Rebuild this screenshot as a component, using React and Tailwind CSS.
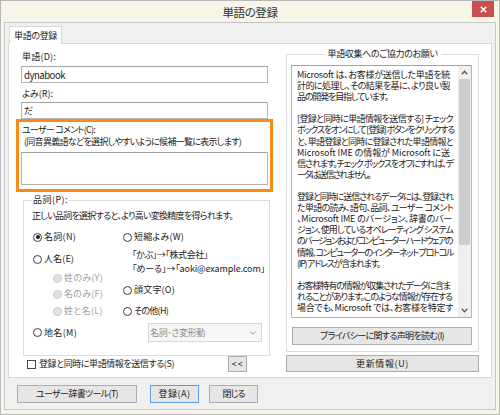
import React, { useLayoutEffect, useRef, useState } from "react";

const F = "font-['Noto_Sans_CJK_JP','Noto_Sans',sans-serif] [font-feature-settings:'palt']";

// Fits a single line of text to the width it has in the reference by
// adjusting letter-spacing (value computed at run time).
function Fit({ w, children, className = "" }) {
  const ref = useRef(null);
  const [ls, setLs] = useState(null);
  useLayoutEffect(() => {
    const el = ref.current;
    if (!el) return;
    el.style.letterSpacing = "0px";
    const natural = el.getBoundingClientRect().width;
    const n = Array.from(el.textContent || "").length;
    if (n > 0) {
      let v = (w - natural) / n;
      v = Math.max(-2.2, Math.min(1.2, v));
      setLs(v);
    }
  }, [w]);
  return (
    <span
      ref={ref}
      className={"inline-block whitespace-nowrap " + className}
      style={ls != null ? { letterSpacing: ls + "px" } : undefined}
    >
      {children}
    </span>
  );
}

function Radio({ checked = false, disabled = false }) {
  return (
    <span
      className={
        disabled
          ? "inline-flex w-[9px] h-[9px] rounded-full border border-[#c9c9c9] bg-[#e2e2e2] shrink-0"
          : "inline-flex items-center justify-center w-[9px] h-[9px] rounded-full border border-[#3c3c3c] bg-white shrink-0"
      }
    >
      {checked ? <span className="block w-[4px] h-[4px] rounded-full bg-[#1b1b1b]" /> : null}
    </span>
  );
}

function RadioItem({ label, w, checked, disabled, className = "" }) {
  return (
    <div className={"flex items-center h-[12px] leading-[12px] " + className}>
      <Radio checked={checked} disabled={disabled} />
      <span className={disabled ? "ml-[2px] text-[#a2a2a2]" : "ml-[2px]"}>
        <Fit w={w}>{label}</Fit>
      </span>
    </div>
  );
}

function Btn({ children, className = "", primary = false }) {
  return (
    <div
      className={
        (primary ? "border border-[#5d9fdc] " : "border border-[#adadad] ") +
        "bg-[#e6e6e6] flex items-center justify-center leading-[12px] " +
        className
      }
    >
      {children}
    </div>
  );
}

function Chevron({ up = false }) {
  return (
    <svg width="7" height="5" viewBox="0 0 7 5">
      <path
        d={up ? "M0.8 4.2 L3.5 1.2 L6.2 4.2" : "M0.8 0.8 L3.5 3.8 L6.2 0.8"}
        fill="none"
        stroke="#5a5a5a"
        strokeWidth="1.3"
      />
    </svg>
  );
}

const infoLines = [
  ["Microsoft は、お客様が送信した単語を統", 153],
  ["計的に処理し、その結果を基に、より良い製", 153],
  ["品の開発を目指しています。", 91],
  ["", 0],
  ["[登録と同時に単語情報を送信する] チェック", 156],
  ["ボックスをオンにして [登録] ボタンをクリックする", 157],
  ["と、単語登録と同時に登録された単語情報と", 156],
  ["Microsoft IME の情報が Microsoft に送", 153],
  ["信されます。チェック ボックスをオフにすれば、デ", 156],
  ["ータは送信されません。", 73],
  ["", 0],
  ["登録と同時に送信されるデータには、登録され", 156],
  ["た単語の読み、語句、品詞、ユーザー コメント", 156],
  ["、Microsoft IME のバージョン、辞書のバー", 155],
  ["ジョン、使用しているオペレーティング システム", 156],
  ["のバージョンおよびコンピューター ハードウェアの", 155],
  ["情報、コンピューターのインターネット プロトコル", 156],
  ["(IP) アドレスが含まれます。", 83],
  ["", 0],
  ["お客様特有の情報が収集されたデータに含ま", 153],
  ["れることがあります。このような情報が存在する", 155],
  ["場合でも、Microsoft では、お客様を特定す", 156],
];

export default function App() {
  return (
    <div
      className={
        F +
        " w-[500px] h-[415px] bg-[#f7f4e8] border border-[#b8b8b8] flex flex-col px-[3px] pb-[4px] text-[9px] text-[#1b1b1b] overflow-hidden"
      }
    >
      {/* title bar */}
      <div className="h-[21px] flex shrink-0">
        <div className="w-[24px]" />
        <div className="flex-1 flex items-center justify-center text-[11.5px] text-[#333333] pt-[2px]">
          <Fit w={55}>単語の登録</Fit>
        </div>
        <div className="w-[22px] h-[16px] mr-[2px] bg-[#c75050] flex items-center justify-center">
          <svg width="7" height="7" viewBox="0 0 7 7">
            <path d="M0.8 0.8 L6.2 6.2 M6.2 0.8 L0.8 6.2" stroke="#ffffff" strokeWidth="1.6" />
          </svg>
        </div>
      </div>

      {/* client */}
      <div className="flex-1 border border-[#c6c6c6] bg-[#f0f0f0] pt-[3px] px-[3px] flex flex-col">
        {/* tab */}
        <div className="flex pl-[1px]">
          <div className="relative z-10 -mb-px h-[18px] w-[53px] border border-b-0 border-[#d9d9d9] bg-white flex items-center justify-center leading-[12px]">
            <Fit w={43}>単語の登録</Fit>
          </div>
        </div>

        {/* panel */}
        <div className="h-[335px] border border-[#d9d9d9] bg-white flex">
          {/* left column */}
          <div className="ml-[7px] w-[257px] flex flex-col">
            <div className="mt-[7px] pl-[6px] leading-[12px]">
              <Fit w={34}>単語(D):</Fit>
            </div>
            <div className="mt-[3px] ml-[5px] w-[247px] h-[17px] border border-[#b5b5b5] border-t-[#a3a3a3] flex items-center px-[2px] leading-[12px] text-[9.5px]">
              <Fit w={41}>dynabook</Fit>
            </div>
            <div className="mt-[5px] pl-[6px] leading-[12px]">
              <Fit w={31}>よみ(R):</Fit>
            </div>
            <div className="mt-[2px] ml-[5px] w-[247px] h-[17px] border border-[#b5b5b5] border-t-[#a3a3a3] flex items-center px-[2px] leading-[12px]">
              だ
            </div>

            {/* highlighted comment block */}
            <div className="w-[257px] h-[73px] border-[3px] border-[#fb8a17] flex flex-col">
              <div className="mt-[2px] pl-[3px] leading-[12px]">
                <Fit w={73}>ユーザー コメント(C):</Fit>
              </div>
              <div className="pl-[5px] leading-[12px]">
                <Fit w={217}>(同音異義語などを選択しやすいように候補一覧に表示します)</Fit>
              </div>
              <div className="mt-[4px] ml-[2px] w-[247px] h-[33px] border border-[#b5b5b5] border-t-[#a3a3a3] bg-white" />
            </div>

            {/* part of speech */}
            <fieldset className="mt-[2px] ml-[7px] w-[247px] border border-[#dcdcdc] px-0 pb-[13px]">
              <legend className="ml-[8px] px-[1px] leading-[12px]">
                <Fit w={35}>品詞(P):</Fit>
              </legend>
              <div className="mt-[4px] pl-[8px] leading-[12px]">
                <Fit w={201}>正しい品詞を選択すると、より高い変換精度を得られます。</Fit>
              </div>
              <div className="mt-[9px] pl-[9px] flex">
                <div className="w-[90px]">
                  <RadioItem label="名詞(N)" w={32} checked />
                </div>
                <RadioItem label="短縮よみ(W)" w={50} />
              </div>
              <div className="pl-[9px] flex">
                <div className="w-[90px] flex flex-col">
                  <RadioItem label="人名(E)" w={30} className="mt-[10px]" />
                  <RadioItem label="姓のみ(Y)" w={39} disabled className="mt-[7px] ml-[20px]" />
                  <RadioItem label="名のみ(F)" w={39} disabled className="mt-[4px] ml-[20px]" />
                  <RadioItem label="姓と名(L)" w={39} disabled className="mt-[5px] ml-[20px]" />
                </div>
                <div className="flex flex-col">
                  <div className="mt-[6px] pl-[9px] leading-[12px]">
                    <Fit w={76}>「かぶ」→「株式会社」</Fit>
                  </div>
                  <div className="mt-[2px] pl-[9px] leading-[12px]">
                    <Fit w={133}>「めーる」→「aoki@example.com」</Fit>
                  </div>
                  <RadioItem label="顔文字(O)" w={41} className="mt-[9px]" />
                  <RadioItem label="その他(H)" w={34} className="mt-[9px]" />
                </div>
              </div>
              <div className="mt-[6px] pl-[9px] flex items-center h-[19px]">
                <div className="w-[90px]">
                  <RadioItem label="地名(M)" w={33} />
                </div>
                <div className="ml-[25px] w-[114px] h-[19px] border border-[#d6d6d6] bg-[#f6f6f6] flex items-center justify-between pl-[1px] pr-[5px] text-[#8c8c8c] leading-[12px]">
                  <Fit w={55}>名詞･さ変形動</Fit>
                  <svg width="6" height="4" viewBox="0 0 6 4">
                    <path d="M0.6 0.6 L3 3.2 L5.4 0.6" fill="none" stroke="#9a9a9a" strokeWidth="1" />
                  </svg>
                </div>
              </div>
            </fieldset>

            {/* send checkbox */}
            <div className="h-[16px] flex items-center">
              <span className="ml-[11px] w-[9px] h-[9px] border border-[#4a4a4a] bg-white shrink-0" />
              <span className="ml-[3px] leading-[12px]">
                <Fit w={135}>登録と同時に単語情報を送信する(S)</Fit>
              </span>
              <Btn className="ml-auto mr-[26px] w-[19px] h-[16px] tracking-[1px]">&lt;&lt;</Btn>
            </div>
          </div>

          {/* right column */}
          <div className="ml-[13px] w-[193px] flex flex-col">
            <fieldset className="mt-[4px] w-[193px] border border-[#dcdcdc] px-0 pb-[6px]">
              <legend className="mx-auto px-[3px] leading-[12px]">
                <Fit w={110}>単語収集へのご協力のお願い</Fit>
              </legend>
              <div className="mt-[5px] ml-[4px] w-[181px] h-[253px] border border-[#b5b5b5] border-t-[#a3a3a3] bg-white flex">
                <div className="flex-1 pl-[5px] pt-[3px] overflow-hidden">
                  {infoLines.map(([l, w], i) => (
                    <div key={i} className="h-[11.1px] leading-[11.1px]">
                      {l === "" ? "\u00a0" : <Fit w={w}>{l}</Fit>}
                    </div>
                  ))}
                </div>
                <div className="w-[13px] bg-[#f0f0f0] flex flex-col">
                  <div className="h-[13px] flex items-center justify-center">
                    <Chevron up />
                  </div>
                  <div className="mx-[1px] h-[166px] bg-[#cdcdcd]" />
                  <div className="flex-1" />
                  <div className="h-[13px] flex items-center justify-center">
                    <Chevron />
                  </div>
                </div>
              </div>
              <Btn className="mt-[9px] ml-[5px] w-[180px] h-[18px]">
                <Fit w={124}>プライバシーに関する声明を読む(I)</Fit>
              </Btn>
            </fieldset>
            <Btn className="mt-[3px] w-[193px] h-[17px]">
              <Fit w={53}>更新情報(U)</Fit>
            </Btn>
          </div>
        </div>

        {/* bottom buttons */}
        <div className="mt-[7px] flex">
          <Btn className="ml-[9px] w-[120px] h-[18px]">
            <Fit w={82}>ユーザー辞書ツール(T)</Fit>
          </Btn>
          <Btn primary className="ml-[13px] w-[49px] h-[18px]">
            <Fit w={32}>登録(A)</Fit>
          </Btn>
          <Btn className="ml-[10px] w-[49px] h-[18px]">
            <Fit w={22}>閉じる</Fit>
          </Btn>
        </div>
      </div>
    </div>
  );
}
